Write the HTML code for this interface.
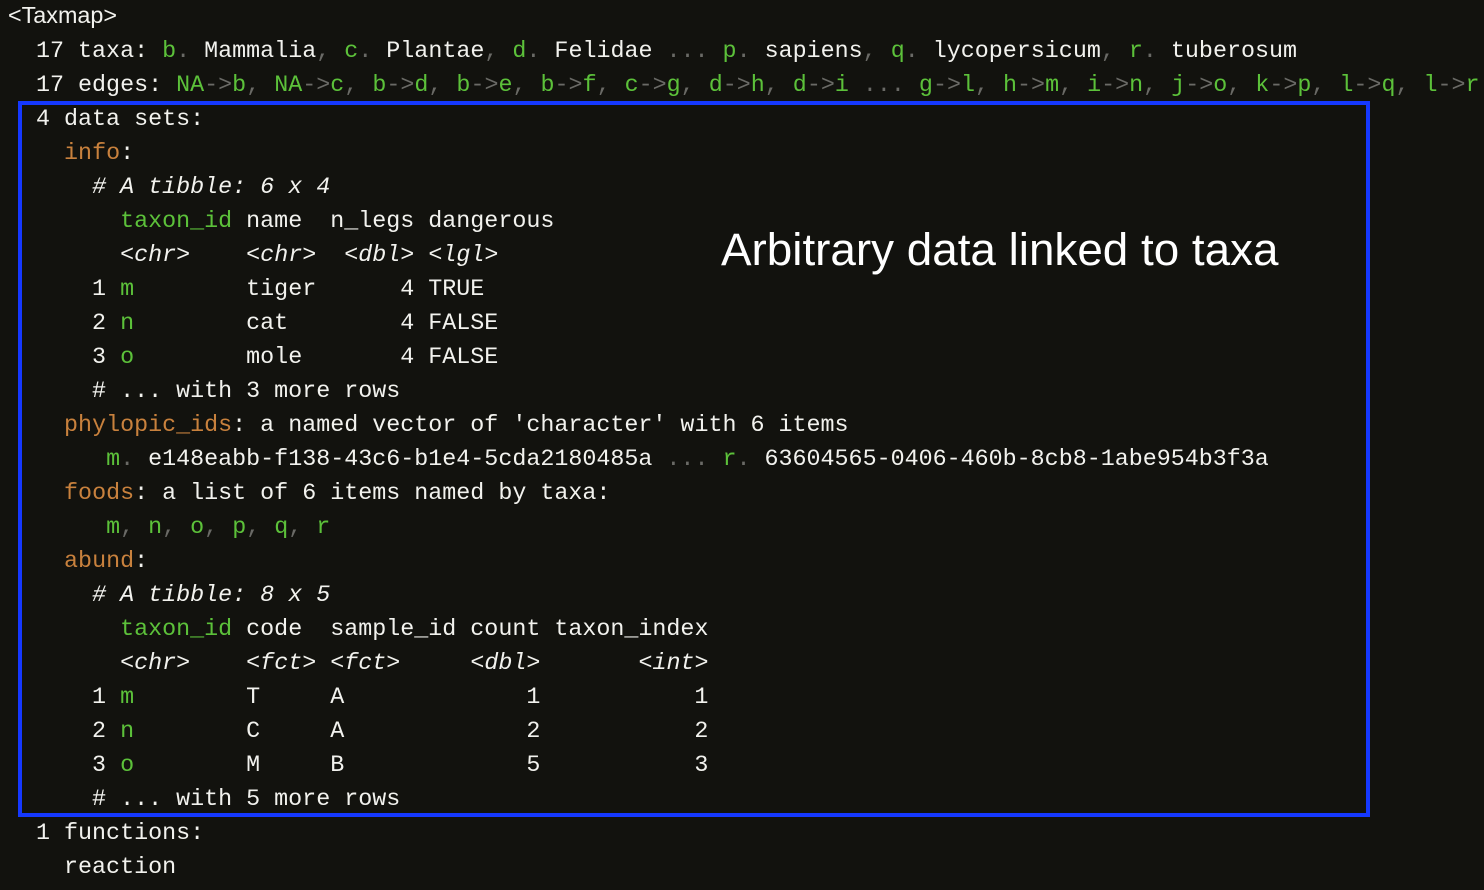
<!DOCTYPE html>
<html><head><meta charset="utf-8"><style>
html,body{margin:0;padding:0;background:#12120e;width:1484px;height:890px;overflow:hidden}
pre{position:absolute;left:8px;top:-2px;margin:0;font-family:"Liberation Mono",monospace;font-size:23.35px;line-height:34px;color:#f2f2ee;white-space:pre}
.g{color:#5cc13a}.d{color:#6a6a66}.o{color:#c8813d}.i{font-style:italic}
.t{font-family:"Liberation Sans",sans-serif}
#box{position:absolute;left:18px;top:101px;width:1344px;height:708px;border:4px solid #1538ff}
#lab{position:absolute;left:721px;top:224px;font-family:"Liberation Sans",sans-serif;font-size:45.8px;color:#fff;line-height:52px}
</style></head><body>
<div id="box"></div>
<pre><span class="t">&lt;Taxmap&gt;</span>
  17 taxa: <span class="g">b</span><span class="d">.</span> Mammalia<span class="d">,</span> <span class="g">c</span><span class="d">.</span> Plantae<span class="d">,</span> <span class="g">d</span><span class="d">.</span> Felidae <span class="d">...</span> <span class="g">p</span><span class="d">.</span> sapiens<span class="d">,</span> <span class="g">q</span><span class="d">.</span> lycopersicum<span class="d">,</span> <span class="g">r</span><span class="d">.</span> tuberosum
  17 edges: <span class="g">NA</span><span class="d">-&gt;</span><span class="g">b</span><span class="d">,</span> <span class="g">NA</span><span class="d">-&gt;</span><span class="g">c</span><span class="d">,</span> <span class="g">b</span><span class="d">-&gt;</span><span class="g">d</span><span class="d">,</span> <span class="g">b</span><span class="d">-&gt;</span><span class="g">e</span><span class="d">,</span> <span class="g">b</span><span class="d">-&gt;</span><span class="g">f</span><span class="d">,</span> <span class="g">c</span><span class="d">-&gt;</span><span class="g">g</span><span class="d">,</span> <span class="g">d</span><span class="d">-&gt;</span><span class="g">h</span><span class="d">,</span> <span class="g">d</span><span class="d">-&gt;</span><span class="g">i</span> <span class="d">...</span> <span class="g">g</span><span class="d">-&gt;</span><span class="g">l</span><span class="d">,</span> <span class="g">h</span><span class="d">-&gt;</span><span class="g">m</span><span class="d">,</span> <span class="g">i</span><span class="d">-&gt;</span><span class="g">n</span><span class="d">,</span> <span class="g">j</span><span class="d">-&gt;</span><span class="g">o</span><span class="d">,</span> <span class="g">k</span><span class="d">-&gt;</span><span class="g">p</span><span class="d">,</span> <span class="g">l</span><span class="d">-&gt;</span><span class="g">q</span><span class="d">,</span> <span class="g">l</span><span class="d">-&gt;</span><span class="g">r</span>
  4 data sets:
    <span class="o">info</span>:
      <span class="i"># A tibble: 6 x 4</span>
        <span class="g">taxon_id</span> name  n_legs dangerous
        <span class="i">&lt;chr&gt;</span>    <span class="i">&lt;chr&gt;</span>  <span class="i">&lt;dbl&gt;</span> <span class="i">&lt;lgl&gt;</span>
      1 <span class="g">m</span>        tiger      4 TRUE
      2 <span class="g">n</span>        cat        4 FALSE
      3 <span class="g">o</span>        mole       4 FALSE
      # ... with 3 more rows
    <span class="o">phylopic_ids</span>: a named vector of 'character' with 6 items
       <span class="g">m</span><span class="d">.</span> e148eabb-f138-43c6-b1e4-5cda2180485a <span class="d">...</span> <span class="g">r</span><span class="d">.</span> 63604565-0406-460b-8cb8-1abe954b3f3a
    <span class="o">foods</span>: a list of 6 items named by taxa:
       <span class="g">m</span><span class="d">,</span> <span class="g">n</span><span class="d">,</span> <span class="g">o</span><span class="d">,</span> <span class="g">p</span><span class="d">,</span> <span class="g">q</span><span class="d">,</span> <span class="g">r</span>
    <span class="o">abund</span>:
      <span class="i"># A tibble: 8 x 5</span>
        <span class="g">taxon_id</span> code  sample_id count taxon_index
        <span class="i">&lt;chr&gt;</span>    <span class="i">&lt;fct&gt;</span> <span class="i">&lt;fct&gt;</span>     <span class="i">&lt;dbl&gt;</span>       <span class="i">&lt;int&gt;</span>
      1 <span class="g">m</span>        T     A             1           1
      2 <span class="g">n</span>        C     A             2           2
      3 <span class="g">o</span>        M     B             5           3
      # ... with 5 more rows
  1 functions:
    reaction</pre>
<div id="lab">Arbitrary data linked to taxa</div>
</body></html>
